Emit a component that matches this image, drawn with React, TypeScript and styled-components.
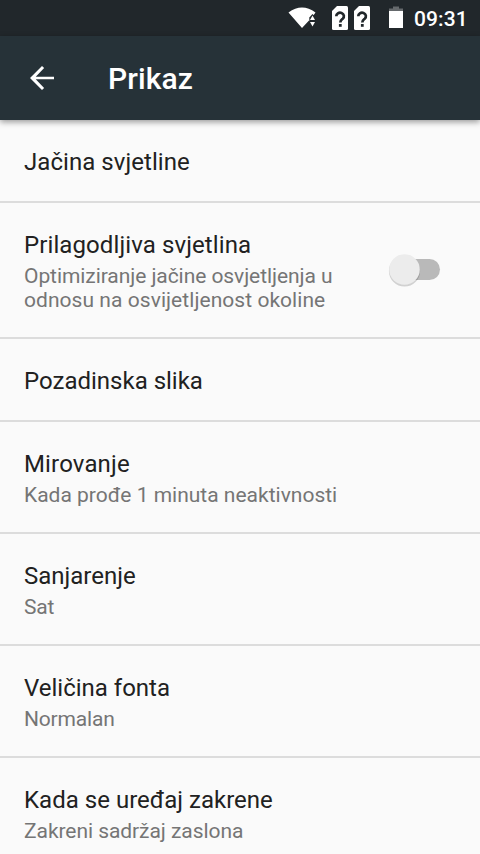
import React from "react";
import styled, { createGlobalStyle } from "styled-components";

const Global = createGlobalStyle`
  * { box-sizing: border-box; }
  html, body { margin: 0; padding: 0; background: #fafafa; overflow: hidden; }
  body { font-family: Roboto, sans-serif; }
`;

const Screen = styled.div`
  width: 480px;
  height: 854px;
  overflow: hidden;
  display: flex;
  flex-direction: column;
  background: #fafafa;
`;

const StatusBar = styled.header`
  height: 36px;
  flex: none;
  display: flex;
  justify-content: flex-end;
  background: #21272b;
`;

const StatusIcons = styled.svg`
  display: block;
  width: 130px;
  height: 36px;
`;

const Clock = styled.span`
  width: 70px;
  padding-left: 4px;
  font-size: 21px;
  font-weight: 500;
  line-height: 38px;
  letter-spacing: 0.1px;
  color: #fff;
`;

const AppBar = styled.div`
  height: 84px;
  flex: none;
  display: flex;
  align-items: center;
  padding-left: 24px;
  background: #263238;
  box-shadow: 0 2px 6px rgba(0, 0, 0, 0.4);
  z-index: 1;
`;

const BackIcon = styled.svg`
  width: 36px;
  height: 36px;
  margin-right: 48px;
`;

const Title = styled.h1`
  margin: 2px 0 0;
  font-size: 30px;
  font-weight: 500;
  line-height: 36px;
  letter-spacing: 0.1px;
  color: #fff;
`;

const List = styled.main`
  display: flex;
  flex-direction: column;
`;

const Row = styled.section<{ $height: number }>`
  height: ${(p) => p.$height}px;
  flex: none;
  display: flex;
  align-items: center;
  justify-content: space-between;
  padding: 0 38px 0 24px;
  border-bottom: 2px solid #dcdcdc;
`;

const Label = styled.div`
  padding-top: 2px;
`;

const Name = styled.div<{ $tracking?: number }>`
  font-size: 24px;
  line-height: 28px;
  letter-spacing: ${(p) => p.$tracking ?? 0}px;
  color: #212121;
`;

const Summary = styled.div`
  padding-top: 5px;
`;

const Line = styled.div<{ $tracking: number }>`
  font-size: 21px;
  line-height: 24px;
  letter-spacing: ${(p) => p.$tracking}px;
  color: #757575;
  white-space: nowrap;
`;

const Switch = styled.svg`
  width: 56px;
  height: 42px;
  flex: none;
`;

type Text = { text: string; tracking: number };
type Setting = { name: string; tracking?: number; summary?: Text[]; height: number; toggle?: boolean };

const settings: Setting[] = [
  { name: "Jačina svjetline", tracking: 0.05, height: 83 },
  {
    name: "Prilagodljiva svjetlina",
    tracking: 0.1,
    summary: [
      { text: "Optimiziranje jačine osvjetljenja u", tracking: -0.07 },
      { text: "odnosu na osvijetljenost okoline", tracking: 0.05 },
    ],
    height: 136,
    toggle: true,
  },
  { name: "Pozadinska slika", height: 83 },
  {
    name: "Mirovanje",
    tracking: 0.15,
    summary: [{ text: "Kada prođe 1 minuta neaktivnosti", tracking: 0 }],
    height: 112,
  },
  { name: "Sanjarenje", summary: [{ text: "Sat", tracking: -0.2 }], height: 112 },
  { name: "Veličina fonta", summary: [{ text: "Normalan", tracking: -0.18 }], height: 112 },
  {
    name: "Kada se uređaj zakrene",
    tracking: 0.02,
    summary: [{ text: "Zakreni sadržaj zaslona", tracking: -0.06 }],
    height: 112,
  },
];

const SimIcon = ({ x }: { x: number }) => (
  <g transform={`translate(${x} 6)`}>
    <path d="M5 0H14.5Q16 0 16 1.5V22.5Q16 24 14.5 24H1.5Q0 24 0 22.5V5Z" fill="#fff" />
    <path d="M4.300 10.300a3.800 3.500 0 1 1 6.400 2.400C9.300 13.800 8.300 14.300 8.300 16.600" fill="none" stroke="#21272b" strokeWidth="2.7" />
    <path d="M6.900 18h2.800v2.800H6.900z" fill="#21272b" />
  </g>
);

export default function App() {
  return (
    <>
      <Global />
      <Screen>
        <StatusBar>
          <StatusIcons viewBox="280 0 130 36">
            <path d="M288.5 12.500Q302 2.500 315.500 12.500L311.500 18V23L309 20.500L302 28Z" fill="#fff" />
            <path d="M309.300 28V17.500L312.500 14L315.800 17.500V28Z" fill="#21272b" />
            <path d="M310 20l2.500-4.500 2.500 4.500z" fill="#fff" />
            <path d="M310 22h5l-2.500 4.500z" fill="#fff" />
            <SimIcon x={332} />
            <SimIcon x={354} />
            <path d="M389 8.500h4V6.500h6v2h4v2.500h-14z" fill="#65696c" />
            <path d="M389 11h14v17h-14z" fill="#fff" />
          </StatusIcons>
          <Clock>09:31</Clock>
        </StatusBar>
        <AppBar>
          <BackIcon viewBox="0 0 24 24">
            <path d="M20 11.100H7.830l5.590-5.690L12 4l-8 8 8 8 1.410-1.410L7.830 12.900H20z" fill="#fff" />
          </BackIcon>
          <Title>Prikaz</Title>
        </AppBar>
        <List>
          {settings.map((s) => (
            <Row key={s.name} $height={s.height}>
              <Label>
                <Name $tracking={s.tracking}>{s.name}</Name>
                {s.summary && (
                  <Summary>
                    {s.summary.map((l) => (
                      <Line key={l.text} $tracking={l.tracking}>{l.text}</Line>
                    ))}
                  </Summary>
                )}
              </Label>
              {s.toggle && (
                <Switch viewBox="386 249 56 42">
                  <rect x="390" y="259" width="50" height="21" rx="10.5" fill="#b9b9b9" />
                  <circle cx="404.5" cy="271" r="15.6" fill="#000" opacity=".16" />
                  <circle cx="404.5" cy="269.500" r="15.300" fill="#ececec" />
                </Switch>
              )}
            </Row>
          ))}
        </List>
      </Screen>
    </>
  );
}
